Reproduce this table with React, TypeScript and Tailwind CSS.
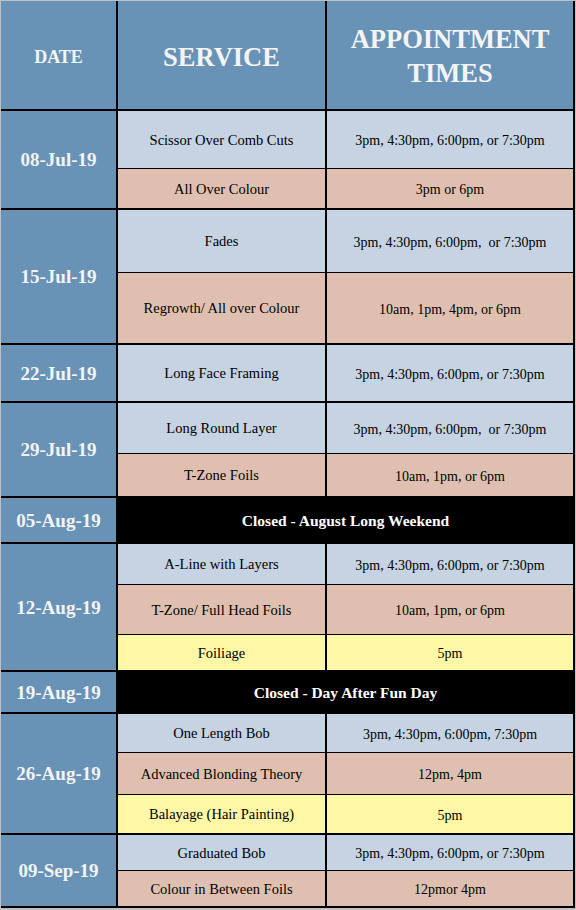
import React from 'react';

type Tone = 'blue' | 'peach' | 'yellow';

interface Slot {
  service: string;
  times: string;
  tone: Tone;
  h: number;
}

interface Group {
  date: string;
  closed?: string;
  h?: number;
  slots?: Slot[];
}

const toneClass: Record<Tone, string> = {
  blue: 'bg-[#c5d3e3]',
  peach: 'bg-[#dfc0b0]',
  yellow: 'bg-[#fdf7a6]',
};

const groups: Group[] = [
  {
    date: '08-Jul-19',
    slots: [
      { service: 'Scissor Over Comb Cuts', times: '3pm, 4:30pm, 6:00pm, or 7:30pm', tone: 'blue', h: 58 },
      { service: 'All Over Colour', times: '3pm or 6pm', tone: 'peach', h: 39 },
    ],
  },
  {
    date: '15-Jul-19',
    slots: [
      { service: 'Fades', times: '3pm, 4:30pm, 6:00pm,  or 7:30pm', tone: 'blue', h: 63 },
      { service: 'Regrowth/ All over Colour', times: '10am, 1pm, 4pm, or 6pm', tone: 'peach', h: 70 },
    ],
  },
  {
    date: '22-Jul-19',
    slots: [{ service: 'Long Face Framing', times: '3pm, 4:30pm, 6:00pm, or 7:30pm', tone: 'blue', h: 56 }],
  },
  {
    date: '29-Jul-19',
    slots: [
      { service: 'Long Round Layer', times: '3pm, 4:30pm, 6:00pm,  or 7:30pm', tone: 'blue', h: 51 },
      { service: 'T-Zone Foils', times: '10am, 1pm, or 6pm', tone: 'peach', h: 42 },
    ],
  },
  { date: '05-Aug-19', closed: 'Closed - August Long Weekend', h: 44 },
  {
    date: '12-Aug-19',
    slots: [
      { service: 'A-Line with Layers', times: '3pm, 4:30pm, 6:00pm, or 7:30pm', tone: 'blue', h: 41 },
      { service: 'T-Zone/ Full Head Foils', times: '10am, 1pm, or 6pm', tone: 'peach', h: 50 },
      { service: 'Foiliage', times: '5pm', tone: 'yellow', h: 35 },
    ],
  },
  { date: '19-Aug-19', closed: 'Closed - Day After Fun Day', h: 40 },
  {
    date: '26-Aug-19',
    slots: [
      { service: 'One Length Bob', times: '3pm, 4:30pm, 6:00pm, 7:30pm', tone: 'blue', h: 39 },
      { service: 'Advanced Blonding Theory', times: '12pm, 4pm', tone: 'peach', h: 42 },
      { service: 'Balayage (Hair Painting)', times: '5pm', tone: 'yellow', h: 38 },
    ],
  },
  {
    date: '09-Sep-19',
    slots: [
      { service: 'Graduated Bob', times: '3pm, 4:30pm, 6:00pm, or 7:30pm', tone: 'blue', h: 36 },
      { service: 'Colour in Between Foils', times: '12pmor 4pm', tone: 'peach', h: 35 },
    ],
  },
];

const GroupRow: React.FC<{ group: Group }> = ({ group }) => (
  <div className="flex border-b-2 border-black">
    {/* date column */}
    <div className="w-[117px] shrink-0 border-r-2 border-black bg-[#6892b6] flex items-center justify-center pt-[2px] text-[19px] font-bold text-[#f4f4f4]">
      {group.date}
    </div>
    {group.closed ? (
      <div
        className="flex-1 bg-black flex items-center justify-center pt-[2px] text-[15.5px] font-bold text-white"
        style={{ height: group.h }}
      >
        {group.closed}
      </div>
    ) : (
      <div className="flex-1 flex flex-col">
        {group.slots!.map((s, i) => (
          <div
            key={i}
            className={`flex ${toneClass[s.tone]} ${i < group.slots!.length - 1 ? 'border-b border-black' : ''}`}
            style={{ height: s.h }}
          >
            <div className="w-[209px] shrink-0 border-r-2 border-black flex items-center justify-center pt-[2px] text-[14.5px] text-black">
              {s.service}
            </div>
            <div className="flex-1 flex items-center justify-center pt-[2px] text-[14px] text-black whitespace-pre">
              {s.times}
            </div>
          </div>
        ))}
      </div>
    )}
  </div>
);

export default function App() {
  return (
    <div className="min-h-screen bg-[#c0c0c0] pt-px pl-px" style={{ fontFamily: '"Liberation Serif", "Times New Roman", serif' }}>
      <div className="w-[574px] border-r-2 border-black">
        {/* header */}
        <div className="flex h-[110px] border-b-2 border-black bg-[#6892b6] font-bold text-[#f4f4f4]">
          <div className="w-[117px] shrink-0 border-r-2 border-black flex items-center justify-center text-[18px] pt-1">
            DATE
          </div>
          <div className="w-[209px] shrink-0 border-r-2 border-black flex items-center justify-center text-[26.5px] pt-[6px]">
            SERVICE
          </div>
          <div className="flex-1 flex flex-col items-center justify-center text-[26.5px] leading-[34px] pt-[2px]">
            <span>APPOINTMENT</span>
            <span>TIMES</span>
          </div>
        </div>
        {groups.map((g) => (
          <GroupRow key={g.date} group={g} />
        ))}
      </div>
    </div>
  );
}
